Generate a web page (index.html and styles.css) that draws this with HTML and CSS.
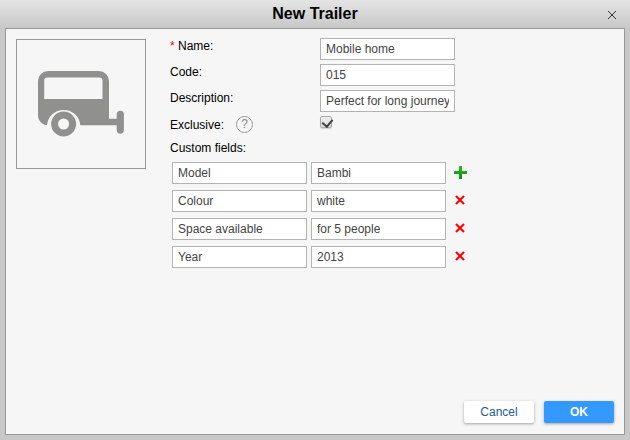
FILE: index.html
```html
<!DOCTYPE html>
<html lang="en">
<head>
  <meta charset="UTF-8">
  <meta name="viewport" content="width=device-width, initial-scale=1">
  <title>New Trailer</title>
  <link rel="stylesheet" href="styles.css">
</head>
<body>
  <header class="titlebar">
    <h1>New Trailer</h1>
    <button type="button" class="close" aria-label="Close">
      <svg width="8" height="8" viewBox="0 0 8 8"><path d="M0 0l8 8M8 0l-8 8"/></svg>
    </button>
  </header>

  <form class="panel">
    <div class="content">
      <div class="photo">
        <svg width="86" height="66" viewBox="0 0 86 66" fill="#90908e">
          <path fill-rule="evenodd" d="M10 0H61a10 10 0 0 1 10 10V47.7H79V54.3H42.3A16.7 16.7 0 0 0 9 54.3C4 53.5 0 49.5 0 44.5V10A10 10 0 0 1 10 0ZM9.5 6.5a3.3 3.3 0 0 0-3.3 3.3V28H64.5V9.8a3.3 3.3 0 0 0-3.3-3.3Z"/>
          <rect x="78.7" y="39.7" width="7.2" height="23" rx="3.6"/>
          <circle cx="25.6" cy="53" r="9" fill="none" stroke="#90908e" stroke-width="7"/>
        </svg>
      </div>

      <div class="fields">
        <div class="row">
          <label for="name"><span class="required">*</span> Name:</label>
          <input type="text" id="name" value="Mobile home">
        </div>
        <div class="row">
          <label for="code">Code:</label>
          <input type="text" id="code" value="015">
        </div>
        <div class="row">
          <label for="description">Description:</label>
          <input type="text" id="description" value="Perfect for long journeys">
        </div>
        <div class="row exclusive">
          <div class="with-help">
            <label for="exclusive">Exclusive:</label>
            <button type="button" class="help">?</button>
          </div>
          <input type="checkbox" id="exclusive" checked>
        </div>

        <h2>Custom fields:</h2>
        <div class="custom">
          <div class="custom-row">
            <input type="text" aria-label="Field name" value="Model">
            <input type="text" aria-label="Field value" value="Bambi">
            <button type="button" class="icon add" aria-label="Add field">
              <svg width="13" height="13" viewBox="0 0 13 13">
                <defs>
                  <linearGradient id="green" x1="0" y1="0" x2="0" y2="1">
                    <stop offset="0" stop-color="#2db82d"/>
                    <stop offset="1" stop-color="#089408"/>
                  </linearGradient>
                </defs>
                <path fill="url(#green)" d="M5 0h3v5h5v3H8v5H5V8H0V5h5z"/>
              </svg>
            </button>
          </div>
          <div class="custom-row">
            <input type="text" aria-label="Field name" value="Colour">
            <input type="text" aria-label="Field value" value="white">
            <button type="button" class="icon remove" aria-label="Remove field">
              <svg width="10" height="10" viewBox="0 0 10 10"><path d="M1 1l8 8M9 1l-8 8"/></svg>
            </button>
          </div>
          <div class="custom-row">
            <input type="text" aria-label="Field name" value="Space available">
            <input type="text" aria-label="Field value" value="for 5 people">
            <button type="button" class="icon remove" aria-label="Remove field">
              <svg width="10" height="10" viewBox="0 0 10 10"><path d="M1 1l8 8M9 1l-8 8"/></svg>
            </button>
          </div>
          <div class="custom-row">
            <input type="text" aria-label="Field name" value="Year">
            <input type="text" aria-label="Field value" value="2013">
            <button type="button" class="icon remove" aria-label="Remove field">
              <svg width="10" height="10" viewBox="0 0 10 10"><path d="M1 1l8 8M9 1l-8 8"/></svg>
            </button>
          </div>
        </div>
      </div>
    </div>

    <footer class="actions">
      <button type="button" class="btn">Cancel</button>
      <button type="submit" class="btn primary">OK</button>
    </footer>
  </form>
</body>
</html>
```
FILE: styles.css
```css
* {
  box-sizing: border-box;
  margin: 0;
  padding: 0;
}

body {
  display: flex;
  flex-direction: column;
  min-height: 100vh;
  padding: 0 5px 5px;
  background: #c8c8c8 linear-gradient(#e4e4e4, #c8c8c8) no-repeat 0 0 / 100% 28px;
  font-family: "Liberation Sans", Arial, sans-serif;
  font-size: 12px;
  line-height: 16px;
  color: #000;
}

button,
input {
  font: inherit;
}

button {
  border: none;
  background: none;
  cursor: pointer;
}

svg {
  display: block;
}

.titlebar {
  display: grid;
  grid-template-columns: 26px 1fr 26px;
  align-items: center;
  height: 28px;
}

.titlebar h1 {
  grid-column: 2;
  font-size: 16px;
  text-align: center;
}

.close {
  display: flex;
  justify-content: center;
  padding-top: 2px;
}

.close path {
  stroke: #333;
  stroke-width: 1;
}

.panel {
  flex: 1;
  display: flex;
  flex-direction: column;
  padding: 9px 10px 11px;
  border: 1px solid #999;
  background: #f6f6f6;
}

.content {
  flex: 1;
  display: flex;
  gap: 24px;
}

.photo {
  display: flex;
  align-items: center;
  justify-content: center;
  flex: none;
  width: 130px;
  height: 130px;
  margin-top: 1px;
  border: 1px solid #999;
}

.row {
  display: grid;
  grid-template-columns: 150px 135px;
  align-items: start;
  height: 26px;
}

.required {
  color: #f00;
}

input[type="text"] {
  width: 135px;
  height: 22px;
  padding: 0 5px;
  border: 1px solid #b3b3b3;
  background: #fff;
  color: #444;
}

.exclusive {
  height: 24px;
}

.with-help {
  display: flex;
  align-items: center;
  gap: 12px;
}

.help {
  width: 17px;
  height: 17px;
  border: 1px solid #999;
  border-radius: 50%;
  font-size: 12px;
  line-height: 15px;
  color: #888;
}

input[type="checkbox"] {
  appearance: none;
  width: 12px;
  height: 12px;
  border: 1px solid #aaa;
  border-radius: 2px;
  background: linear-gradient(#eee, #ddd);
  box-shadow: 0 1px 1px rgba(0, 0, 0, 0.15);
}

input[type="checkbox"]:checked::before {
  content: "";
  display: block;
  width: 5px;
  height: 8px;
  margin-left: 3px;
  border: solid #404040;
  border-width: 0 2px 2px 0;
  transform: rotate(40deg);
}

h2 {
  font-size: 12px;
  font-weight: normal;
}

.custom {
  display: grid;
  gap: 6px;
  padding: 6px 2px;
}

.custom-row {
  display: flex;
  gap: 4px;
}

.icon {
  display: flex;
  align-items: center;
  justify-content: center;
  width: 21px;
}

.add {
  padding-bottom: 1px;
}

.remove {
  padding: 0 1px 2px 0;
}

.remove path {
  stroke: #f00;
  stroke-width: 2;
}

.actions {
  display: flex;
  justify-content: flex-end;
  gap: 10px;
}

.btn {
  width: 70px;
  height: 22px;
  border-radius: 2px;
  background: #fff;
  box-shadow: 0 1px 3px rgba(0, 0, 0, 0.35);
  color: #1f5c8f;
}

.primary {
  background: #39f;
  color: #fff;
  font-weight: bold;
}
```
